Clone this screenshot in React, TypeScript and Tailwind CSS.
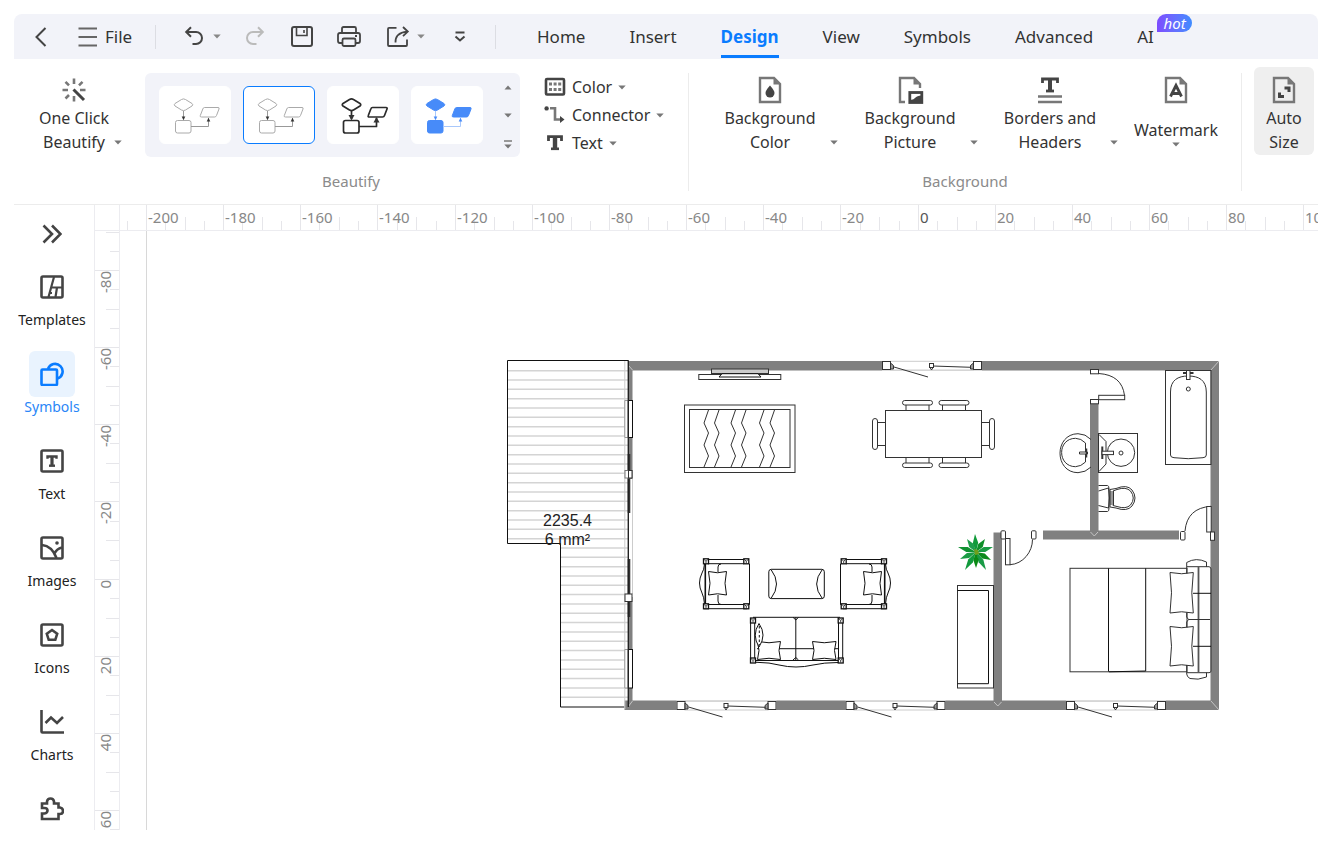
import type { ReactNode } from "react";
import clsx from "clsx";

const TABS = ["Home", "Insert", "Design", "View", "Symbols", "Advanced"];

// distance on screen between two labelled ruler marks (20 units)
const RULER_STEP = 77.15;

const stepSize = (i: number) =>
  Math.round((i + 1) * RULER_STEP) - Math.round(i * RULER_STEP);

function Caret({ up = false, className }: { up?: boolean; className?: string }) {
  return (
    <svg width="8" height="5" viewBox="0 0 8 5" className={clsx("shrink-0 text-[#777]", className)} aria-hidden="true">
      <path d={up ? "M0.5 4.5 L4 0.5 L7.5 4.5 Z" : "M0.3 0.5 H7.7 L4 4.6 Z"} fill="currentColor" />
    </svg>
  );
}

function Icon({ w = 24, h = 24, sw = 2, children, className }: {
  w?: number; h?: number; sw?: number; children: ReactNode; className?: string;
}) {
  return (
    <svg
      width={w}
      height={h}
      viewBox={`0 0 ${w} ${h}`}
      fill="none"
      stroke="currentColor"
      strokeWidth={sw}
      className={clsx("shrink-0", className)}
      aria-hidden="true"
    >
      {children}
    </svg>
  );
}

/* ---------- top bar ---------- */

function TopBar() {
  return (
    <header className="flex h-[45px] items-center rounded-t-lg bg-[#f2f3f9] pl-4 text-[#444]">
      <button aria-label="Back" className="flex w-[22px] justify-center">
        <Icon w={12} h={20} sw={2}><path d="M10.5 1 L1.5 10 L10.5 19" /></Icon>
      </button>
      <button className="ml-[26px] flex w-[54px] items-center gap-[7px] text-[17px] leading-6 text-[#333]">
        <Icon w={20} h={20} sw={2} className="text-[#666]"><path d="M0.5 1.5H19 M0.5 10H19 M0.5 18.5H19" /></Icon>
        File
      </button>
      <span className="ml-[23px] h-6 w-px bg-[#dcdde3]" />

      <button aria-label="Undo" className="ml-[26px]">
        <Icon sw={2}><path d="M9 2.2 L4.2 7 L9 11.8 M4.5 7 H14 A6 6 0 0 1 14 19 H10.5" /></Icon>
      </button>
      <button aria-label="Undo history" className="ml-[7px]"><Caret className="text-[#888]" /></button>
      <button aria-label="Redo" className="ml-[22px] text-[#bbb]">
        <Icon sw={2}><path d="M15 2.2 L19.8 7 L15 11.8 M19.5 7 H10 A6 6 0 0 0 10 19 H13.5" /></Icon>
      </button>
      <button aria-label="Save" className="ml-[23px]">
        <Icon sw={2}>
          <rect x="2" y="2" width="20" height="19" rx="2" />
          <path d="M6.5 2 V10.5 H17 V2 M14 5 V8" strokeWidth="1.6" />
        </Icon>
      </button>
      <button aria-label="Print" className="ml-[23px]">
        <Icon sw={1.8}>
          <path d="M5 8 V3.5 Q5 2 6.5 2 H17.5 Q19 2 19 3.5 V8" />
          <path d="M5 18 H3 Q1 18 1 16 V10 Q1 8 3 8 H21 Q23 8 23 10 V16 Q23 18 21 18 H19 M18 11 H20" />
          <rect x="5.5" y="13.5" width="13" height="7.5" rx="1.5" />
        </Icon>
      </button>
      <button aria-label="Share" className="ml-[25px]">
        <Icon sw={1.8}>
          <path d="M10.5 2.9 H3 Q2 2.9 2 3.9 V20 Q2 21 3 21 H20 Q21 21 21 20 V14.5" />
          <path d="M9.5 17.5 Q9 8 21 6.6 M17 2 L21.8 6.6 L17 11.2" />
        </Icon>
      </button>
      <button aria-label="Share options" className="ml-[7px]"><Caret className="text-[#888]" /></button>
      <button aria-label="More commands" className="ml-[23px]">
        <Icon sw={2}><path d="M7.5 7.5 H16.5 M7.5 11.5 L12 15.5 L16.5 11.5" /></Icon>
      </button>
      <span className="ml-[23px] h-6 w-px bg-[#dcdde3]" />

      <nav className="ml-[41px] flex h-full items-stretch gap-11 text-[17px] text-[#333]">
        {TABS.map((tab) => (
          <button
            key={tab}
            className={clsx(
              "mb-px border-b-3 pt-1",
              tab === "Design" ? "border-[#0a7cff] font-bold text-[#0a7cff]" : "border-transparent",
            )}
          >
            {tab}
          </button>
        ))}
        <button className="relative mb-px border-b-3 border-transparent pt-1">
          AI
          <span className="absolute top-0 left-5 h-[18px] w-[35px] rounded-full rounded-bl-none bg-linear-to-r from-[#7c4bff] to-[#3d8bff] text-[15px] leading-[18px] text-white italic">
            hot
          </span>
        </button>
      </nav>
    </header>
  );
}

/* ---------- ribbon ---------- */

function PageOutline() {
  return (
    <>
      <path d="M2 2 H16 L22 8 V26 H2 Z" />
      <path d="M15.5 2.5 V8.5 H21.5 Z" fill="currentColor" stroke="none" />
    </>
  );
}

// big ribbon button, two lines of text, arrow at the end of the second line
function BigButton({ icon, lines, className }: { icon: ReactNode; lines: [string, string]; className: string }) {
  return (
    <button className={clsx("flex flex-col items-center pt-[3px] leading-6", className)}>
      <span className="mb-[2px] flex h-7 items-center text-[#777]">{icon}</span>
      <span className="whitespace-nowrap">{lines[0]}</span>
      <span className="grid w-full grid-cols-[1fr_auto_1fr] items-center">
        <span />
        {lines[1]}
        <Caret className="justify-self-end" />
      </span>
    </button>
  );
}

function ThemeTile({ color, line, weight, filled = false, selected = false, name }: {
  color: string; line: string; weight: number; filled?: boolean; selected?: boolean; name: string;
}) {
  return (
    <button
      aria-label={name}
      aria-pressed={selected}
      className={clsx("h-[58px] w-[72px] overflow-hidden rounded-md border bg-white", selected ? "border-[#0a7cff]" : "border-white")}
    >
      <svg width="70" height="56" viewBox="1 1 70 56" fill={filled ? color : "none"} stroke={color} strokeWidth={weight} strokeLinejoin="round" aria-hidden="true">
        <path d="M22.5 13.5 Q24.5 12.3 26.5 13.5 L33 17.5 Q34.5 18.7 33 20 L26.5 24 Q24.5 25.2 22.5 24 L16 20 Q14.5 18.7 16 17.5 Z" />
        <rect x="16.5" y="34.5" width="15.5" height="12.5" rx="2" />
        <path d="M45.5 21.5 H59 Q60.6 21.5 60 23 L57.5 29.5 Q57 31 55.5 31 H42.5 Q40.6 31 41.3 29.5 L43.8 23 Q44.3 21.5 45.5 21.5 Z" />
        <g stroke={line} fill="none">
          <path d="M24.5 25 V33 M32 40.5 H49.5 V32" />
        </g>
        <g stroke="none" fill={filled ? color : "#333"}>
          <path d={weight > 1 ? "M21.5 29 H27.5 L24.5 34.5 Z" : "M22.7 30.5 H26.3 L24.5 34.2 Z"} />
          <path d={weight > 1 ? "M46.5 36.5 H52.5 L49.5 31 Z" : "M47.7 35.5 H51.3 L49.5 31.8 Z"} />
        </g>
      </svg>
    </button>
  );
}

function GroupLabel({ children }: { children: ReactNode }) {
  return <div className="text-center text-[15px] leading-5 text-[#8b8b8b]">{children}</div>;
}

function Ribbon() {
  return (
    <div className="flex h-[146px] items-start border-b border-[#ececec] pt-2 text-[16px] text-[#333]">
      <section className="mt-[6px] flex h-[118px] w-[675px] shrink-0 flex-col justify-between border-r border-[#ececec]">
        <div className="flex pl-3">
          <BigButton
            className="mr-[23px] w-24"
            lines={["One Click", "Beautify"]}
            icon={
              <Icon w={24} h={24} sw={2.6}>
                <path d="M12 0.5 V6 M0.5 12 H6 M18 12 H23.5 M12 18 V23.5 M3.5 3.8 L7 7.3 M20.5 3.8 L17 7.3 M3.5 20.5 L7 17" />
                <path d="M11.5 11.5 L22 22" stroke="#444" strokeWidth="3" />
              </Icon>
            }
          />
          <div className="flex h-[84px] w-[375px] items-center gap-3 rounded-md bg-[#f2f3f9] pl-[14px]">
            <ThemeTile name="Simple" color="#aaa" line="#999" weight={1} />
            <ThemeTile name="Simple grey" color="#aaa" line="#999" weight={1} selected />
            <ThemeTile name="Bold" color="#2b2b2b" line="#2b2b2b" weight={1.7} />
            <ThemeTile name="Blue" color="#478bf9" line="#a9c8fb" weight={1} filled />
            <div className="flex h-full flex-1 flex-col items-center justify-between pt-3 pb-2">
              <button aria-label="Previous styles" className="flex"><Caret up /></button>
              <button aria-label="Next styles" className="flex"><Caret /></button>
              <button aria-label="All styles" className="flex flex-col gap-[2px]">
                <span className="h-[2px] w-2 bg-[#999]" />
                <Caret />
              </button>
            </div>
          </div>
          <div className="ml-6 flex flex-col leading-7">
            <button className="flex items-center gap-[6px]">
              <Icon w={22} h={20} sw={2.6} className="text-[#444]">
                <rect x="2" y="2" width="18" height="15.5" rx="1" />
                <path d="M5 6.9 H8 M9.6 6.9 H12.6 M14.2 6.9 H17.2 M5 12.6 H8 M9.6 12.6 H12.6 M14.2 12.6 H17.2" strokeWidth="3" stroke="#777" />
              </Icon>
              Color <Caret />
            </button>
            <button className="flex items-center gap-[6px]">
              <Icon w={22} h={20} className="text-[#777]">
                <path d="M6 3.2 H11 V14.5 H16" strokeWidth="2.6" />
                <circle cx="2.6" cy="3.4" r="2.2" fill="#444" stroke="none" />
                <path d="M16 11 L20.5 14.5 L16 18 Z" fill="#444" stroke="none" />
              </Icon>
              Connector <Caret />
            </button>
            <button className="flex items-center gap-[6px]">
              <Icon w={22} h={20} className="text-[#444]">
                <path d="M4.5 8 V3.6 H17.5 V8" strokeWidth="2.8" />
                <path d="M11 3.6 V16" strokeWidth="4.4" />
                <path d="M7 15.8 H15" strokeWidth="2.6" />
              </Icon>
              Text <Caret />
            </button>
          </div>
        </div>
        <GroupLabel>Beautify</GroupLabel>
      </section>

      <section className="mt-[6px] flex h-[118px] w-[553px] shrink-0 flex-col justify-between border-r border-[#ececec]">
        <div className="flex gap-1 pl-[13px]">
          <BigButton
            className="w-[136px]"
            lines={["Background", "Color"]}
            icon={
              <Icon w={24} h={28} sw={2.4}>
                <PageOutline />
                <path d="M12 9.5 Q16.5 14.5 16.5 17 A4.5 4.5 0 0 1 7.5 17 Q7.5 14.5 12 9.5 Z" fill="#444" stroke="none" />
              </Icon>
            }
          />
          <BigButton
            className="w-[136px]"
            lines={["Background", "Picture"]}
            icon={
              <Icon w={28} h={28} sw={2.4}>
                <path d="M9 26 H4 V2 H18 L24 8 V12" />
                <path d="M17.5 2.5 V8.5 H23.5 Z" fill="currentColor" stroke="none" />
                <rect x="13.8" y="16.5" width="12" height="10" stroke="#444" strokeWidth="2.8" fill="white" />
                <path d="M14 27 V23.5 Q17 24.5 19 22 T25.5 19.5 V27 Z" fill="#444" stroke="none" />
              </Icon>
            }
          />
          <BigButton
            className="w-[136px]"
            lines={["Borders and", "Headers"]}
            icon={
              <Icon w={26} h={28} sw={2.8}>
                <path d="M5.5 7 V3 H20.5 V7" stroke="#444" />
                <path d="M13 3 V15" stroke="#444" strokeWidth="4" />
                <path d="M9 15 H17" stroke="#444" />
                <path d="M1 20.5 H25 M1 26 H25" strokeWidth="2.4" />
              </Icon>
            }
          />
          <button className="flex w-[108px] flex-col items-center pt-[3px] leading-6">
            <span className="mb-[14px] flex h-7 items-center text-[#777]">
              <Icon w={24} h={28} sw={2.4}>
                <PageOutline />
                <path d="M6.5 20.5 L12 9.5 L17.5 20.5 M8.5 17.5 H15.5" stroke="#444" strokeWidth="2.8" />
              </Icon>
            </span>
            Watermark
            <Caret />
          </button>
        </div>
        <GroupLabel>Background</GroupLabel>
      </section>

      <button className="ml-3 flex h-[88px] w-15 shrink-0 flex-col items-center rounded-md bg-[#efefef] pt-[9px] leading-6">
        <span className="mb-[2px] flex h-7 items-center text-[#777]">
          <Icon w={24} h={28} sw={2.4}>
            <PageOutline />
            <path d="M12.5 12 H17 V16 M12 20.5 H7.5 V16.5" stroke="#444" strokeWidth="3" />
          </Icon>
        </span>
        <span>Auto</span>
        <span>Size</span>
      </button>
    </div>
  );
}

/* ---------- left sidebar ---------- */

const SIDEBAR = [
  {
    label: "Templates",
    icon: <><rect x="1.5" y="1.5" width="21" height="21" rx="1.5" /><path d="M8.5 22 L14 2 M11 12.5 H22 M10.5 18 H12 M17 12.5 L15.5 22" strokeWidth="2.2" /></>,
  },
  {
    label: "Symbols",
    icon: <><rect x="1.5" y="7.5" width="15.5" height="15.5" rx="1" /><path d="M8 7 A7.5 7.5 0 1 1 17.5 16.5" /></>,
  },
  {
    label: "Text",
    icon: <><rect x="1.5" y="1.5" width="21" height="21" rx="1.5" /><path d="M7.5 9.8 V7.5 H16.5 V9.8" strokeWidth="2.4" /><path d="M12 7 V16.5" strokeWidth="3.2" /><path d="M9 16.7 H15" strokeWidth="2.4" /></>,
  },
  {
    label: "Images",
    icon: <><rect x="1.5" y="1.5" width="21" height="21" rx="1.5" /><path d="M2 9 Q12 10 16.5 22 M22 11.5 Q16.5 13 14.8 17" /><circle cx="17" cy="7" r="1.8" fill="currentColor" stroke="none" /></>,
  },
  {
    label: "Icons",
    icon: <><rect x="1.5" y="1.5" width="21" height="21" rx="1.5" /><path d="M12 7 L17.2 10.8 L15.3 16.8 H8.7 L6.8 10.8 Z" /></>,
  },
  {
    label: "Charts",
    icon: <path d="M1.5 0 V21.5 Q1.5 22.5 2.5 22.5 H24 M5.5 13 L11 7.5 L17 13 L23 7" />,
  },
  {
    label: "",
    icon: <path d="M2 22 V16.5 H4.5 Q7.5 16 7.5 13.5 T4.5 11 H2 V6.5 H7 V4.5 Q7.5 1.5 10.5 1.5 T14 4.5 V6.5 H18.5 V10.5 H20 Q23 11 23 14 T20 17 H18.5 V22 Z" />,
  },
];

function Sidebar() {
  return (
    <aside className="flex w-20 shrink-0 flex-col items-center overflow-hidden pr-1 text-[#444]">
      <button aria-label="Expand panel" className="mt-[19px]">
        <Icon w={20} h={20} sw={2.6}><path d="M1.5 1.5 L10 10 L1.5 18.5 M10 1.5 L18.5 10 L10 18.5" /></Icon>
      </button>
      <nav className="mt-5 flex flex-col gap-[21px]">
        {SIDEBAR.map(({ label, icon }) => (
          <button key={label} aria-label={label || "Extensions"} className="flex flex-col items-center">
            <span
              className={clsx(
                "flex size-[46px] items-center justify-center rounded-md",
                label === "Symbols" && "bg-[#e9f3fe] text-[#0a7cff]",
              )}
            >
              <Icon w={24} h={24} sw={2.6}>{icon}</Icon>
            </span>
            <span className={clsx("h-5 text-[14px] leading-5", label === "Symbols" ? "text-[#2a86f7]" : "text-[#222]")}>
              {label}
            </span>
          </button>
        ))}
      </nav>
    </aside>
  );
}

/* ---------- rulers ---------- */

const H_MARKS = Array.from({ length: 16 }, (_, i) => -200 + i * 20);
const V_MARKS = Array.from({ length: 8 }, (_, i) => -80 + i * 20);

function HTicks() {
  return (
    <div className="flex h-full w-full items-end [grid-area:1/1]">
      <span className="h-full flex-1 border-l border-[#e6e6ea]" />
      <span className="h-[9px] flex-1 border-l border-[#e6e6ea]" />
      <span className="h-[13px] flex-1 border-l border-[#e6e6ea]" />
      <span className="h-[9px] flex-1 border-l border-[#e6e6ea]" />
    </div>
  );
}

function VTicks() {
  return (
    <div className="flex h-full w-full flex-col items-end [grid-area:1/1]">
      <span className="w-full flex-1 border-t border-[#e6e6ea]" />
      <span className="w-[9px] flex-1 border-t border-[#e6e6ea]" />
      <span className="w-[13px] flex-1 border-t border-[#e6e6ea]" />
      <span className="w-[9px] flex-1 border-t border-[#e6e6ea]" />
    </div>
  );
}

function HorizontalRuler() {
  return (
    <div className="flex h-[26px] overflow-hidden border-b border-[#ececf0] text-[15px] leading-6 text-[#888]">
      <div className="flex w-[26px] shrink-0 justify-end overflow-hidden">
        <div className="grid w-[77px] shrink-0"><HTicks /></div>
      </div>
      {H_MARKS.map((mark, i) => (
        <div key={mark} className="grid shrink-0" style={{ width: stepSize(i) }}>
          <HTicks />
          <span className={clsx("pl-[2px] [grid-area:1/1]", mark === 0 && "text-[#555]")}>{mark}</span>
        </div>
      ))}
    </div>
  );
}

function VerticalRuler() {
  return (
    <div className="flex w-[26px] shrink-0 flex-col overflow-hidden border-x border-[#ececf0] text-[15px] text-[#888]">
      <div className="flex h-[39px] shrink-0 flex-col justify-end overflow-hidden">
        <div className="grid h-[77px] shrink-0"><VTicks /></div>
      </div>
      {V_MARKS.map((mark, i) => (
        <div key={mark} className="grid shrink-0 justify-items-start" style={{ height: stepSize(i) }}>
          <VTicks />
          <span className="rotate-180 self-start pb-px leading-5 [grid-area:1/1] [writing-mode:vertical-rl]">{mark}</span>
        </div>
      ))}
    </div>
  );
}

/* ---------- floor plan ---------- */

const WALL = "#808080";

function DoubleDoor({ x, y }: { x: number; y: number }) {
  return (
    <g transform={`translate(${x} ${y})`}>
      <rect x="0" y="-0.5" width="100" height="10" fill="white" stroke="none" />
      <path d="M8 0.3 H92 M8 9 H92" stroke="#ccc" />
      <rect x="0.5" y="0.5" width="8" height="8" />
      <rect x="91.5" y="0.5" width="8" height="8" />
      <path d="M8.5 2 L11.5 4.5 V8 H8.5 Z M91.5 2 L88.5 4.5 V8 H91.5 Z" fill="#999" />
      <path d="M12 6 L46 16 M51 5 L89 6.3" />
      <rect x="47.5" y="2.5" width="4" height="4" />
      <path d="M48 6.5 L49.5 9 L51 6.5" />
    </g>
  );
}

function Pillow({ x, y, w, h }: { x: number; y: number; w: number; h: number }) {
  const r = x + w;
  const b = y + h;
  return (
    <path
      d={`M${x} ${y} Q${x + w / 2} ${y + 2.5} ${r} ${y} Q${r - 3} ${y + h / 2} ${r} ${b} Q${x + w / 2} ${b - 2.5} ${x} ${b} Q${x + 3} ${y + h / 2} ${x} ${y} Z`}
      fill="white"
    />
  );
}

function Post({ x, y }: { x: number; y: number }) {
  return (
    <g stroke="#111">
      <rect x={x - 2.5} y={y - 2.5} width="5" height="5" fill="white" strokeWidth="1.3" />
      <path d={`M${x - 2} ${y - 2} L${x} ${y} L${x + 2} ${y - 2} M${x} ${y} V${y + 2}`} strokeWidth="0.8" />
    </g>
  );
}

function Armchair() {
  return (
    <g stroke="#111">
      <path d="M841 559.5 H884 M846 563.7 H882 M840.5 563.7 V604.5 L843 605 M846 604.5 H882 M843 608.7 H886" />
      <path d="M884.7 564 V605" strokeWidth="1.6" />
      <path d="M885.5 564 Q886 570 888 573 Q893 583 888 593 Q886 597 885.5 604" />
      <path d="M869 564 Q872 564 872 567 V572 M872 595 V601 Q872 604.5 869 604.5" />
      <Pillow x={863.5} y={571.5} w={18} h={23.5} />
      <Post x={843.7} y={561.3} />
      <Post x={884} y={561.3} />
      <Post x={843.7} y={606.3} />
      <Post x={884} y={606.3} />
    </g>
  );
}

function DiningSet() {
  return (
    <g>
      {[902.5, 939].map((x) => (
        <g key={x}>
          <rect x={x} y="400.5" width="30" height="4.5" rx="2.2" />
          <rect x={x} y="463" width="30" height="4.5" rx="2.2" />
          <path d={`M${x + 3.5} 405 V410 M${x + 26.5} 405 V410 M${x + 3.5} 458 V463 M${x + 26.5} 458 V463`} />
        </g>
      ))}
      <rect x="872.5" y="418.5" width="5" height="31" rx="2.5" />
      <rect x="989.5" y="418.5" width="5" height="31" rx="2.5" />
      <path d="M877.5 422.5 H886 M877.5 445.5 H886 M981.5 422.5 H989.5 M981.5 445.5 H989.5" />
      <rect x="885.5" y="410.5" width="96" height="47" />
    </g>
  );
}

function Plant() {
  const tips = [
    [-1, -18, "#119a3a"], [9, -13, "#0f8f2a"], [17, -5, "#1a9c44"], [15, 8, "#0c8a1c"], [10, 18, "#199b46"],
    [0, 16, "#0b8a15"], [-11, 18, "#129a3c"], [-16, 7, "#1a9c44"], [-18, -5, "#119232"], [-9, -13, "#1f9e4c"],
  ] as const;
  return (
    <g transform="translate(976 552)" stroke="none">
      {tips.map(([tx, ty, fill]) => {
        const len = Math.hypot(tx, ty);
        const nx = (-ty / len) * 2.7;
        const ny = (tx / len) * 2.7;
        return (
          <path
            key={`${tx}:${ty}`}
            d={`M0 0 L${tx * 0.5 + nx} ${ty * 0.5 + ny} L${tx} ${ty} L${tx * 0.5 - nx} ${ty * 0.5 - ny} Z`}
            fill={fill}
          />
        );
      })}
      <path d="M-2 -3 L2 -2 L3 2 L-1 3 Z" fill="#6f9f1c" />
    </g>
  );
}

function Rug() {
  return (
    <g>
      <rect x="684.5" y="405" width="110.5" height="67.5" />
      <rect x="689.5" y="409.5" width="100.5" height="58" />
      {[704, 714.5, 731, 741.5, 759.5, 770].map((x) => (
        <path key={x} d={`M${x + 4.5} 410 L${x} 423 L${x + 4.5} 433 L${x} 445 L${x + 4.5} 456 L${x} 467`} />
      ))}
    </g>
  );
}

function Sofa() {
  return (
    <g stroke="#111">
      <path d="M753 617.3 H840 M795.8 617.3 V660 M755 660.5 H840 M757 648.7 H838" />
      <path d="M755 662.3 H757 Q770 662.5 779 665 Q796 669 813 665 Q824 662.5 838 662.5" />
      <path d="M750.6 621 V662 M754.7 623 V658 M838.5 623 V658 M842.7 623 V658" />
      <path d="M793 617.3 L795.8 620 L798.5 617.3 M793 660 L795.8 657.5 L798.5 660" />
      <Pillow x={757.5} y={641.5} w={23} h={18} />
      <Pillow x={812.5} y={641.5} w={23.5} h={18} />
      <path d="M759 623.5 Q751.5 635 759 647 Q767 635 759 623.5 Z" fill="white" />
      <path d="M759.3 626 V645" strokeDasharray="2.5 2" />
      <Post x={753} y={620.5} />
      <Post x={753} y={660.5} />
      <Post x={840.7} y={620.5} />
      <Post x={840.7} y={660.5} />
    </g>
  );
}

function Bathroom() {
  return (
    <g>
      {/* tub */}
      <rect x="1165.5" y="370.5" width="45.5" height="94" />
      <path d="M1170.5 455 V392 C1170.5 380 1178 376 1188.3 376 S1206.3 380 1206.3 392 V455 Q1206.3 457.5 1203 457.7 Q1188 459.7 1174 457.7 Q1170.5 457.5 1170.5 455 Z" />
      <circle cx="1188.3" cy="389" r="2" />
      <path d="M1183 373 H1193.5" strokeWidth="2" />
      <rect x="1186.5" y="370.5" width="3.5" height="9" fill="white" />
      {/* round basin */}
      <path d="M1091 439.5 Q1085.5 433.7 1078 433.7 C1054 434 1054 472.5 1078 472.7 Q1085.5 472.5 1091 467" />
      <path d="M1085.5 443 Q1081 438.3 1075.5 438.3 C1057 438.5 1057 466.5 1075.5 466.7 Q1081 466.5 1085.5 462 Z" />
      <path d="M1079.5 452 H1087.5 V454 H1079.5 Z" fill="white" />
      <path d="M1086.5 448.5 V457.5" strokeWidth="1.5" />
      {/* sink */}
      <rect x="1098.5" y="433.5" width="39" height="39" />
      <circle cx="1121" cy="452.7" r="13.7" />
      <circle cx="1121" cy="453" r="2" />
      <path d="M1099 434.5 L1106 441.5 V464 L1099 471.5" />
      <path d="M1102.3 446.5 V459" strokeWidth="2" />
      <rect x="1102" y="451.2" width="11.5" height="3.4" fill="white" />
      {/* toilet */}
      <path d="M1098.5 485.5 H1107.5 Q1109 485.5 1109 489 V508 Q1109 511.5 1107.5 511.5 H1098.5 M1098.5 491 L1108.5 488 Q1110.5 498 1108.5 508 L1098.5 505.5" />
      <path d="M1110 489.5 L1116 488.5 Q1127 484 1132 490 Q1138 498 1132 506 Q1127 512 1116 508 L1110 507 Z" />
      <path d="M1113 491 L1117 489.5 Q1126 486.5 1130.5 491 Q1136 498 1130.5 505 Q1126 509.5 1117 506.5 L1113 505.5 Z M1111 491 V505 M1113.5 491 V505" />
    </g>
  );
}

function Bed() {
  return (
    <g>
      <rect x="1070" y="568.3" width="117" height="103.5" />
      <path d="M1108.5 568.3 V671.5 M1145.7 568.3 V671 L1109 671.8" stroke="#111" />
      <path d="M1186.7 578 V568 M1186.7 568 V562.5 Q1196 557 1206.5 562 V567" />
      <path d="M1186.7 664 V674 Q1187 677 1190 678.5 Q1198 680.5 1206.5 677 V672.5" />
      <path d="M1187 566.7 H1209 Q1211 567 1211 569 V671 Q1211 672.7 1209 672.7 H1187" />
      <path d="M1198.5 567 V672" stroke="#555" strokeWidth="1.8" />
      <path d="M1186.7 613 V617 L1188.5 619.5 L1186.7 622 V627 M1188.5 619.5 H1210" />
      <path d="M1193 593.3 H1211 M1193 646.3 H1211" stroke="#111" />
      <Pillow x={1170} y={572.5} w={23.3} h={40.5} />
      <Pillow x={1170} y={626.5} w={23.3} h={39.5} />
    </g>
  );
}

function FloorPlan() {
  return (
    <svg
      width="1171"
      height="598"
      viewBox="147 231 1171 598"
      fill="none"
      stroke="#333"
      strokeWidth="1"
      className="shrink-0"
      role="img"
      aria-label="Apartment floor plan"
    >
      {/* balcony */}
      <g stroke="#d4d4d4" strokeWidth="1.5">
        {Array.from({ length: 36 }, (_, i) => {
          const y = 370.7 + i * 9.33;
          return <path key={i} d={`M${y < 543 ? 508 : 561} ${y} H628`} />;
        })}
      </g>
      <path d="M507.5 360.5 H628.5 V707 H560.5 V543.5 H507.5 Z" stroke="#111" />

      {/* outer walls */}
      <g fill={WALL} stroke="none">
        <rect x="628" y="361" width="591" height="9.5" />
        <rect x="624.5" y="700.5" width="594.5" height="9.5" />
        <rect x="1210.5" y="361" width="8.5" height="349" />
        <rect x="1090" y="402" width="8.5" height="131" />
        <rect x="1043" y="530.5" width="136" height="9" />
        <rect x="993.5" y="532.5" width="8.5" height="172" />
        <rect x="628" y="361" width="4.5" height="118" />
        <rect x="628" y="597" width="4.5" height="110" />
      </g>
      <path d="M1211 370 L1219 361 M1211 701 L1219 710 M629 366 L632.5 370 M628 707 L632.5 701 M1090.5 532 L1094.3 536 L1098 532 M994 702 L997.8 706 L1001.5 702" stroke="#c4c4c4" />

      {/* sliding windows on the left wall */}
      <path d="M624.8 361 V709 M632.5 479 V594" stroke="#ccc" />
      <rect x="628.5" y="400.5" width="4" height="37" fill="white" stroke="#111" />
      <rect x="628.5" y="649.5" width="4" height="38.5" fill="white" stroke="#111" />
      <path d="M624.8 400.5 H628 V437.5 H624.8 Z M624.8 649.5 H628 V688 H624.8 Z" stroke="#999" fill="white" />
      <path d="M629 454 V513 M629 559 V617" strokeWidth="2.6" />
      <path d="M628.3 361 V707" stroke="#222" strokeWidth="1.4" />
      <rect x="625" y="470.5" width="7" height="7.5" fill="white" stroke="#777" />
      <rect x="628.5" y="470.5" width="3.5" height="7.5" fill="white" />
      <rect x="625" y="594" width="7" height="7.5" fill="white" />

      <DoubleDoor x={882} y={361} />
      <DoubleDoor x={676.5} y={701} />
      <DoubleDoor x={845.5} y={701} />
      <DoubleDoor x={1066} y={701} />

      {/* tv */}
      <rect x="698.8" y="374.5" width="82" height="5" />
      <rect x="711.5" y="369" width="57" height="4.5" fill="#ccc" />
      <path d="M722 373.7 H758 L761 377 H719 Z" fill="white" stroke="#111" />

      <Rug />
      <DiningSet />
      <Armchair />
      <g transform="translate(1590 0) scale(-1 1)"><Armchair /></g>

      {/* coffee table */}
      <rect x="768.8" y="569.3" width="55.5" height="29.3" rx="2.5" stroke="#111" />
      <path d="M771 569.5 Q782 584 771 598.5 M822.3 569.5 Q811 584 822.3 598.5" stroke="#111" />

      <Sofa />
      <Plant />

      {/* sideboard */}
      <rect x="957.5" y="585.5" width="36" height="102.5" />
      <path d="M957.5 590.5 H988.5 V683.7 H957.5" stroke="#111" />

      {/* single doors */}
      <g>
        <rect x="1001" y="530.8" width="4.5" height="8.2" rx="1" fill="white" />
        <rect x="1005.5" y="538.5" width="4.5" height="26.3" />
        <path d="M1010 564.7 C1023 564 1032.5 552 1032.5 539.5" />
        <rect x="1031.5" y="530.8" width="4.5" height="8.2" rx="1" />
        <rect x="1090.5" y="369.5" width="8" height="4.3" fill="white" />
        <path d="M1098.7 373.5 Q1122 375 1124.5 395.5" />
        <rect x="1098.7" y="395.3" width="26" height="4.4" />
        <rect x="1090.5" y="399.5" width="8" height="4.3" fill="white" />
        <rect x="1180.5" y="531.5" width="4.5" height="8.5" rx="1" />
        <path d="M1185 531 Q1187 508 1211 506.3" />
        <rect x="1206.7" y="506.5" width="4.5" height="25.5" fill="white" />
        <rect x="1210.5" y="532" width="4" height="8.3" fill="white" />
      </g>

      <Bathroom />
      <Bed />

      <g fill="#222" stroke="none" textAnchor="middle" className="font-['Liberation_Sans',sans-serif] text-[16px]">
        <text x="567.5" y="526">2235.4</text>
        <text x="567.5" y="545">6 mm²</text>
      </g>
    </svg>
  );
}

export default function App() {
  return (
    <div className="flex h-screen flex-col overflow-hidden bg-white p-[14px] font-['Noto_Sans',sans-serif]">
      <TopBar />
      <Ribbon />
      <main className="flex min-h-0 flex-1">
        <Sidebar />
        <div className="flex min-w-0 flex-1 flex-col">
          <div className="flex">
            <div className="h-[26px] w-[26px] shrink-0 border border-t-0 border-[#ececf0]" />
            <div className="min-w-0 flex-1"><HorizontalRuler /></div>
          </div>
          <div className="flex min-h-0 flex-1">
            <VerticalRuler />
            <div className="ml-[26px] flex min-w-0 flex-1 overflow-hidden border-l border-[#d8d8d8]">
              <FloorPlan />
            </div>
          </div>
        </div>
      </main>
    </div>
  );
}
